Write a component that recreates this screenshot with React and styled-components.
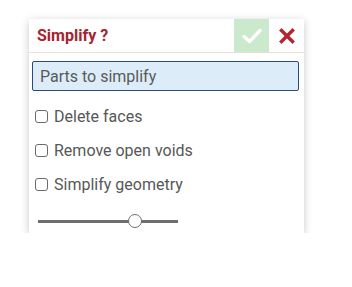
import React, { useState } from "react";
import styled, { createGlobalStyle } from "styled-components";

const Global = createGlobalStyle`
  html, body { margin: 0; padding: 0; background: #ffffff; }
  body { font-family: Roboto, "Liberation Sans", sans-serif; }
`;

const Panel = styled.div`
  margin: 19px 0 0 29px;
  width: 275px;
  background: #fff;
  box-shadow: 0 2px 8px rgba(0,0,0,0.22);
  display: flex;
  flex-direction: column;
`;

const Header = styled.div`
  height: 33px;
  display: flex;
  align-items: center;
  border-bottom: 1px solid #e8e0d8;
`;

const Title = styled.div`
  flex: 1;
  padding-left: 8px;
  font-size: 16px;
  font-weight: 700;
  color: #a32530;
`;

const IconButton = styled.div`
  width: 35px;
  height: 33px;
  display: flex;
  align-items: center;
  justify-content: center;
  background: ${p => p.$bg || "transparent"};
`;

const Body = styled.div`
  display: flex;
  flex-direction: column;
  padding: 8px 5px 0 3px;
`;

const Input = styled.div`
  height: 28px;
  border: 1px solid #2c4a73;
  border-radius: 2px;
  background: #dcedf9;
  display: flex;
  align-items: center;
  padding-left: 7px;
  font-size: 16px;
  color: #5a5a5a;
`;

const Rows = styled.div`
  padding-top: 8px;
  display: flex;
  flex-direction: column;
`;

const Row = styled.label`
  height: 34px;
  display: flex;
  align-items: center;
  gap: 6px;
  padding-left: 3px;
  font-size: 16px;
  color: #575757;
`;

const Box = styled.span`
  width: 13px;
  height: 13px;
  border: 1px solid #6a6a6a;
  border-radius: 3px;
  background: #fff;
  box-sizing: border-box;
  flex: none;
`;

const SliderRow = styled.div`
  height: 32px;
  display: flex;
  align-items: flex-start;
  padding: 14px 0 0 6px;
  box-sizing: border-box;
`;

const Track = styled.div`
  position: relative;
  width: 140px;
  height: 3px;
  margin-top: 5px;
  background: #6e6e6e;
`;

const Thumb = styled.div`
  position: absolute;
  top: -6px;
  width: 14px;
  height: 14px;
  border-radius: 50%;
  border: 1.5px solid #6e6e6e;
  background: #fff;
  box-sizing: border-box;
  transform: translateX(-50%);
`;

export default function App() {
  const [val] = useState(0.69);
  const items = ["Delete faces", "Remove open voids", "Simplify geometry"];
  return (
    <>
      <Global />
      <Panel>
        <Header>
          <Title>Simplify ?</Title>
          <IconButton $bg="#cbe9cc">
            <svg width="20" height="16" viewBox="0 0 20 16">
              <path d="M2 8.5 L7.5 13.5 L18 2.5" fill="none" stroke="#fff" strokeWidth="3.4" strokeLinecap="round" strokeLinejoin="round" />
            </svg>
          </IconButton>
          <IconButton>
            <svg width="16" height="16" viewBox="0 0 16 16">
              <path d="M2.5 2.5 L13.5 13.5 M13.5 2.5 L2.5 13.5" stroke="#b3262f" strokeWidth="3.4" strokeLinecap="square" />
            </svg>
          </IconButton>
        </Header>
        <Body>
          <Input>Parts to simplify</Input>
          <Rows>
            {items.map(t => (
              <Row key={t}>
                <Box />
                {t}
              </Row>
            ))}
          </Rows>
          <SliderRow>
            <Track>
              <Thumb style={{ left: `${val * 100}%` }} />
            </Track>
          </SliderRow>
        </Body>
      </Panel>
    </>
  );
}
